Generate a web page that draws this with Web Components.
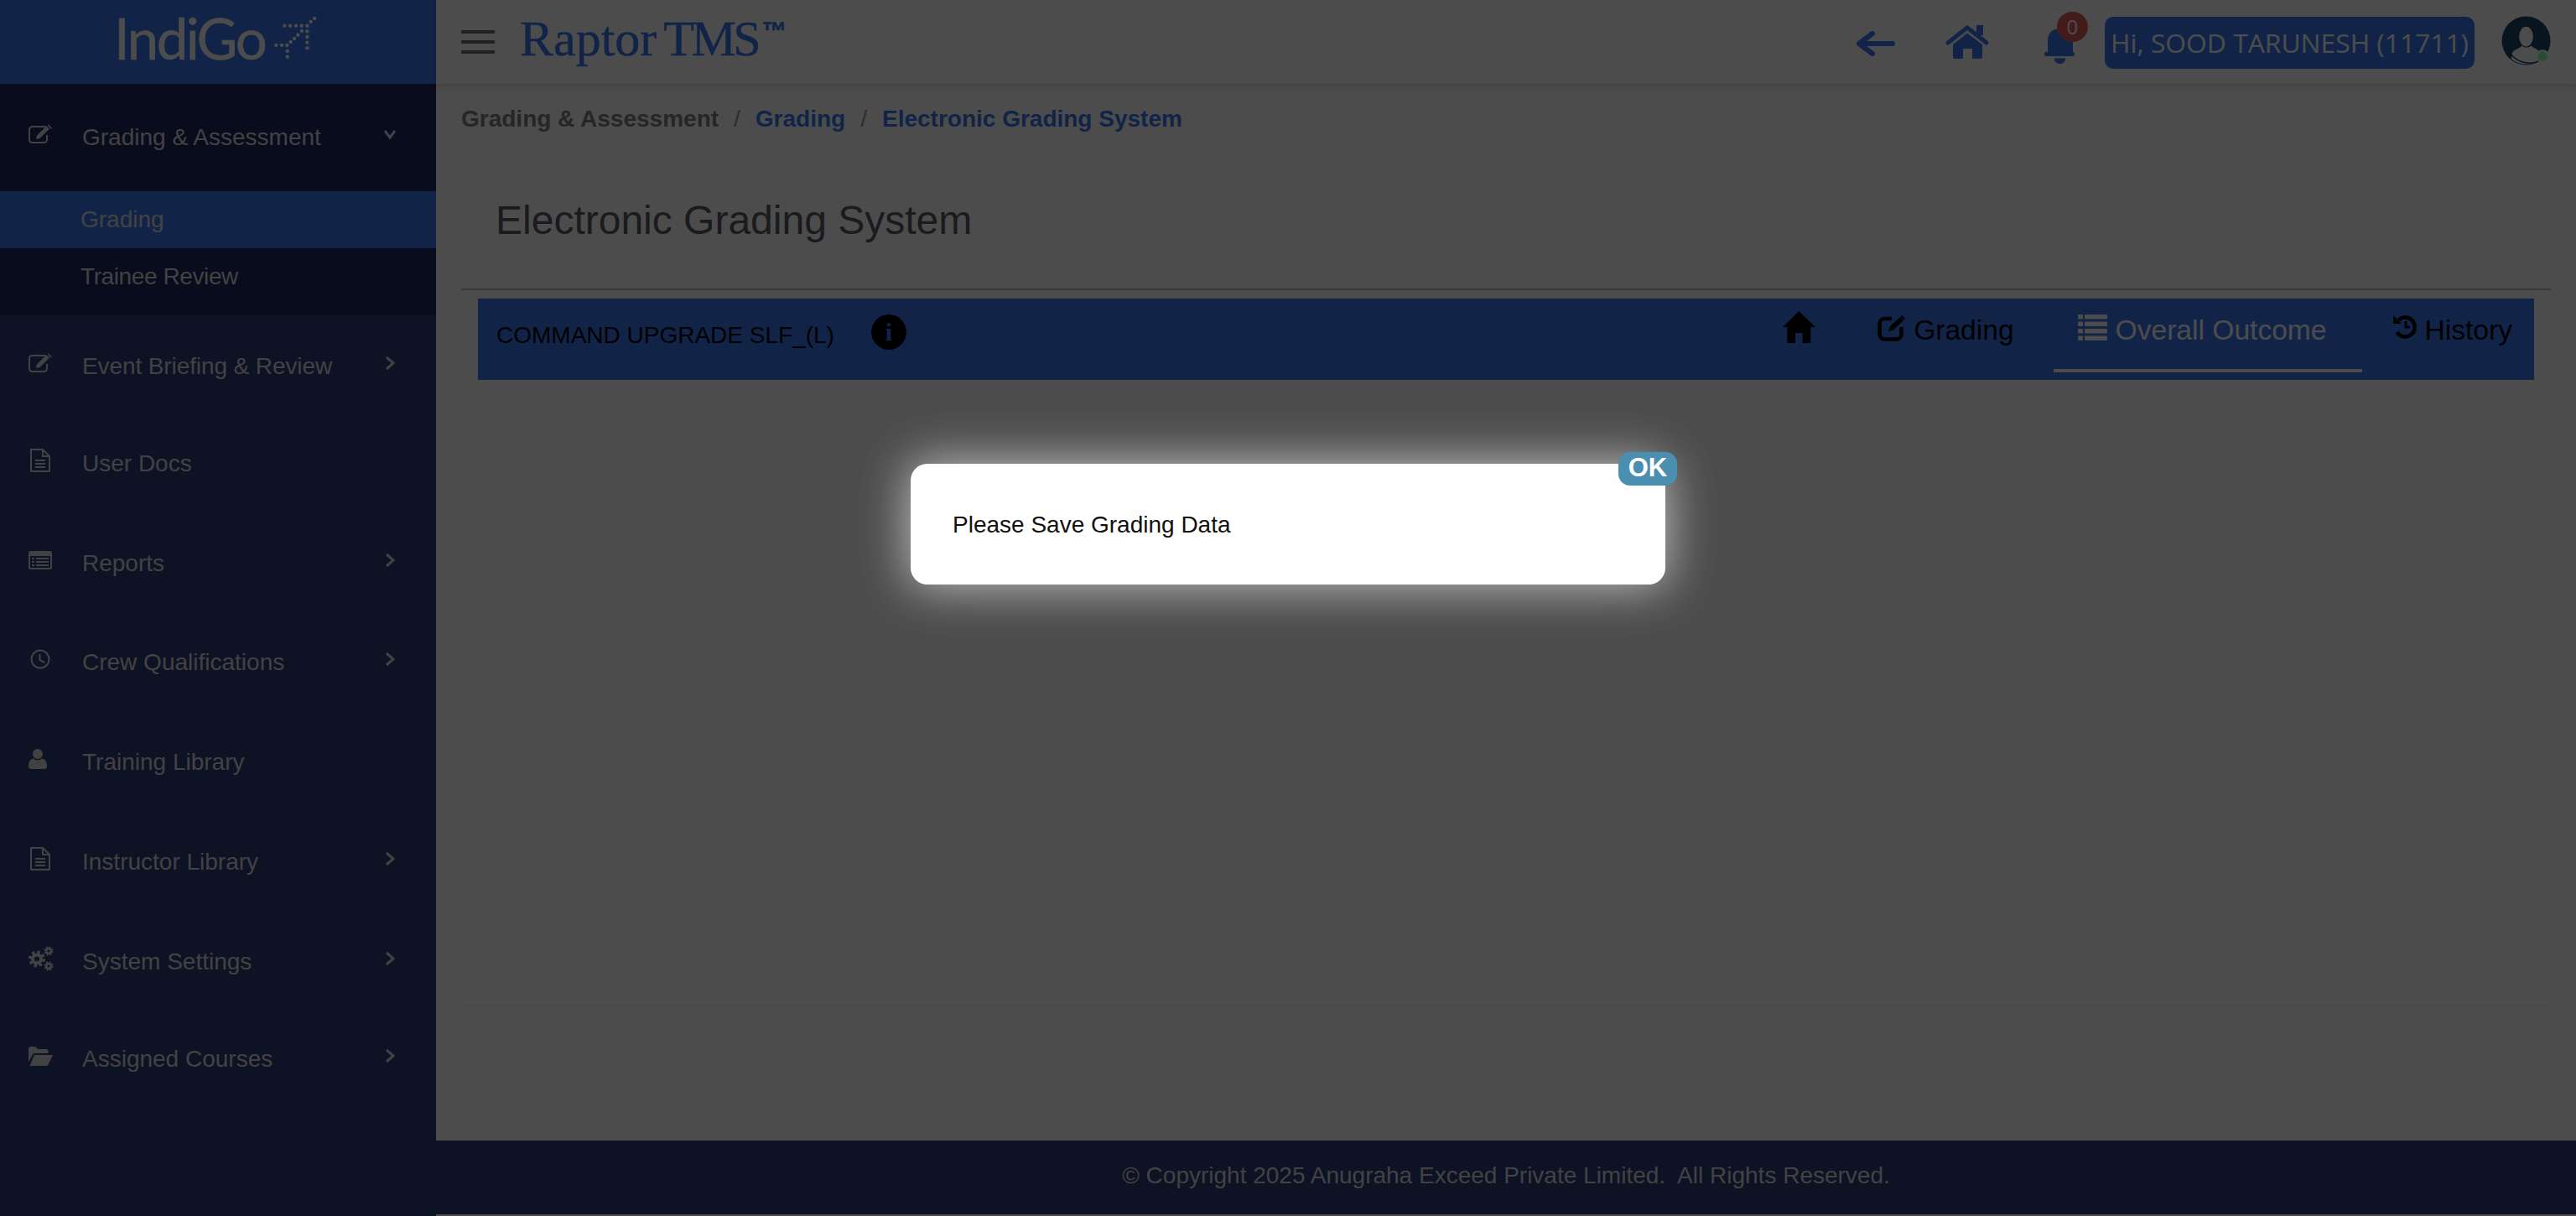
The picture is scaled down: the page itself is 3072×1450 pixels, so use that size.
<!DOCTYPE html>
<html>
<head>
<meta charset="utf-8">
<title>Raptor TMS</title>
<style>
    html, body { margin: 0; height: 100%; background: #fff; }
    body { font-family: "Liberation Sans", Arial, sans-serif; font-size: 28px; overflow: hidden; }
</style>
</head>
<body>

<tms-app>
    <side-nav slot="side">
        <nav-item icon="edit" arrow="down" open>Grading &amp; Assessment</nav-item>
        <sub-item active>Grading</sub-item>
        <sub-item style="letter-spacing: -.4px">Trainee Review</sub-item>
        <sub-end></sub-end>
        <nav-item icon="edit" arrow="right" style="height: 122px; letter-spacing: -.1px">Event Briefing &amp; Review</nav-item>
        <nav-item icon="file" style="height: 110px">User Docs</nav-item>
        <nav-item icon="listalt" arrow="right" style="height: 128px">Reports</nav-item>
        <nav-item icon="clock" arrow="right" style="height: 108px">Crew Qualifications</nav-item>
        <nav-item icon="user" style="height: 130px">Training Library</nav-item>
        <nav-item icon="file" arrow="right" style="height: 108px">Instructor Library</nav-item>
        <nav-item icon="cogs" arrow="right" style="height: 130px">System Settings</nav-item>
        <nav-item icon="folder" arrow="right" style="height: 102px">Assigned Courses</nav-item>
    </side-nav>
    <top-bar slot="top"></top-bar>
    <crumb-trail slot="main"></crumb-trail>
    <page-title slot="main">Electronic Grading System</page-title>
    <grading-bar slot="main">
        <tab-item icon="tabhome"></tab-item>
        <tab-item icon="tabedit">Grading</tab-item>
        <tab-item icon="tablist" active>Overall Outcome</tab-item>
        <tab-item icon="tabhistory">History</tab-item>
    </grading-bar>
    <page-foot slot="foot">© Copyright 2025 Anugraha Exceed Private Limited.&nbsp; All Rights Reserved.</page-foot>
</tms-app>
<alert-dialog>Please Save Grading Data</alert-dialog>

<script>
const BLUE = "#3a7bf0";
const NAVY = "#2f3c7c";
const NAVY_DARK = "#212860";

const ICONS = {
    edit: [28, 22, `<path d="M20 2H4.500A3.500 3.500 0 0 0 1 5.500V17.500A3.500 3.500 0 0 0 4.500 21H18.500A3.500 3.500 0 0 0 22 17.500V12" fill="none" stroke="currentColor" stroke-width="2"/><path d="M10 12.500 21.500 1 25 4.500 13.500 16 9 17ZM22.800 0.300 24 -0.500 28 3.500 26.500 4.800Z" fill="currentColor"/>`],
    file: [24, 28, `<path d="M1 1H15L23 9V27H1ZM15 1V9H23M6 14H18M6 18H18M6 22H18" fill="none" stroke="currentColor" stroke-width="2"/>`],
    listalt: [28, 22, `<path fill-rule="evenodd" d="M2.500 0H25.500A2.500 2.500 0 0 1 28 2.500V19.500A2.500 2.500 0 0 1 25.500 22H2.500A2.500 2.500 0 0 1 0 19.500V2.500A2.500 2.500 0 0 1 2.500 0ZM2 6V20H26V6ZM4 8H7V10H4ZM9 8H24V10H9ZM4 12H7V14H4ZM9 12H24V14H9ZM4 16H7V18H4ZM9 16H24V18H9Z" fill="currentColor"/>`],
    clock: [24, 24, `<circle cx="12" cy="12" r="10.500" fill="none" stroke="currentColor" stroke-width="2"/><path d="M11.500 6V13L17 16" fill="none" stroke="currentColor" stroke-width="2"/>`],
    user: [22, 24, `<circle cx="11" cy="6" r="6" fill="currentColor"/><path d="M0 21C0 15 2 12 6 11.500C8.500 14 13.500 14 16 11.500C20 12 22 15 22 21C22 23 20.500 24 18.500 24H3.500C1.500 24 0 23 0 21Z" fill="currentColor"/>`],
    cogs: [30, 28, `<g fill="none" stroke="currentColor"><circle cx="10" cy="14.500" r="5" stroke-width="4"/><circle cx="10" cy="14.500" r="8" stroke-width="4" stroke-dasharray="3.300 3"/><circle cx="24" cy="5" r="2.800" stroke-width="2.400"/><circle cx="24" cy="5" r="4.400" stroke-width="2.400" stroke-dasharray="1.900 1.560"/><circle cx="24" cy="23" r="2.800" stroke-width="2.400"/><circle cx="24" cy="23" r="4.400" stroke-width="2.400" stroke-dasharray="1.900 1.560"/></g>`],
    folder: [29, 23, `<path d="M0 2.500A2.500 2.500 0 0 1 2.500 0H8L11 3H21A2.500 2.500 0 0 1 23.500 5.500V8H8C6 8 5 9 4.200 10.500L0 18.500ZM8 10H29L23.500 21.500C23 22.500 22 23 21 23H1.500L6 12C6.500 10.500 7 10 8 10Z" fill="currentColor"/>`],
    right: [12, 18, `<path d="M2 2 10 9 2 16" fill="none" stroke="currentColor" stroke-width="3"/>`],
    down: [16, 11, `<path d="M2 1 8 9 14 1" fill="none" stroke="currentColor" stroke-width="3"/>`],
    back: [46, 30, `<path d="M3 15H43M19 3 3 15 19 27" fill="none" stroke="currentColor" stroke-width="6" stroke-linecap="round" stroke-linejoin="round"/>`],
    house: [50, 40, `<rect x="36" y="0" width="8" height="12" fill="currentColor"/><path d="M2 21 25 3 48 21" fill="none" stroke="currentColor" stroke-width="5" stroke-linecap="round"/><path d="M8 23 25 9.500 43 23V38A2 2 0 0 1 41 40H31V28H20V40H10A2 2 0 0 1 8 38Z" fill="currentColor"/>`],
    bell: [36, 43, `<path d="M4 29V16C4 6 10 1 19 1C28 1 34 6 34 16V29Z" fill="currentColor"/><rect y="28.700" width="36" height="5.300" rx="2.500" fill="currentColor"/><path d="M12 36.500H25C25 41 22 43 18.500 43C15 43 12 41 12 36.500Z" fill="currentColor"/>`],
    tabhome: [39, 38, `<path d="M19.300 0 39 19H33.300V38H23.700V26H15V38H5.300V19H0Z" fill="currentColor"/>`],
    tabedit: [34, 32, `<path d="M17 5H8A6 6 0 0 0 2.500 11V24A6 6 0 0 0 8 29.500H23A6 6 0 0 0 28.500 24V15" fill="none" stroke="currentColor" stroke-width="4.500"/><path d="M13 20 15 14 27 3 31 7 19 18.500Z" fill="currentColor"/><path d="M29 1 33 5 31.500 6.500 27.500 2.500Z" fill="currentColor"/>`],
    tablist: [35, 31, `<g fill="currentColor"><rect y="0" width="6" height="5.500" rx="1"/><rect x="8" y="0" width="27" height="5.500" rx="1"/><rect y="8.500" width="6" height="5.500" rx="1"/><rect x="8" y="8.500" width="27" height="5.500" rx="1"/><rect y="17" width="6" height="5.500" rx="1"/><rect x="8" y="17" width="27" height="5.500" rx="1"/><rect y="25.500" width="6" height="5.500" rx="1"/><rect x="8" y="25.500" width="27" height="5.500" rx="1"/></g>`],
    tabhistory: [30, 30, `<path d="M7.500 6.500A11.500 11.500 0 1 1 5.500 21" fill="none" stroke="currentColor" stroke-width="4.500"/><path d="M1 1V11H11Z" fill="currentColor"/><path d="M16 8V15H21" fill="none" stroke="currentColor" stroke-width="3"/>`]
};

// every icon stays the pixel size given by its viewBox unless the user says otherwise
class UiIcon extends HTMLElement {
    connectedCallback() {
        const [w, h, body] = ICONS[this.getAttribute("name")];
        this.attachShadow({ mode: "open" }).innerHTML = `
            <style>:host { display: block; width: ${w}px; height: ${h}px; line-height: 0; } svg { overflow: visible; }</style>
            <svg width="${w}" height="${h}" viewBox="0 0 ${w} ${h}">${body}</svg>`;
    }
}

class TmsApp extends HTMLElement {
    constructor() {
        super();
        this.attachShadow({ mode: "open" }).innerHTML = `
            <style>
                :host { display: grid; grid-template-columns: 520px 1fr; width: 3072px; height: 1450px; }
                .column { display: flex; flex-direction: column; min-width: 0; }
                .content { flex: 1; display: flex; flex-direction: column; padding: 0 30px; }
                .rule { margin-top: auto; margin-bottom: 160px; border-top: 2px solid #f6f6f6; }
            </style>
            <slot name="side"></slot>
            <div class="column">
                <slot name="top"></slot>
                <div class="content">
                    <slot name="main"></slot>
                    <div class="rule"></div>
                </div>
                <slot name="foot"></slot>
            </div>`;
    }
}

class SideNav extends HTMLElement {
    constructor() {
        super();
        this.attachShadow({ mode: "open" }).innerHTML = `
            <style>
                :host { display: flex; flex-direction: column; background: ${NAVY}; color: #dedede; }
                .brand { height: 100px; background: ${BLUE}; color: #fff; display: flex; padding-left: 136px; box-sizing: border-box; }
                .word { font-family: Lato, sans-serif; font-size: 67px; line-height: 90px; letter-spacing: -2.500px; -webkit-text-stroke: .5px currentColor; }
                svg { margin: 20px 0 0 11px; }
            </style>
            <div class="brand">
                <span class="word">IndiGo</span>
                <svg width="50" height="50" viewBox="990 60 150 150" fill="currentColor" id="dots"></svg>
            </div>
            <slot></slot>`;
        const dots = [[1134,66],[1121,78],[1108,92],[1088,92],[1068,92],[1047,92],[1027,92],[1089,111],[1108,112],[1075,125],[1108,132],[1062,138],[1049,150],[1108,152],[1036,162],[1017,162],[997,162],[1108,172],[1037,183],[1037,203]];
        this.shadowRoot.getElementById("dots").innerHTML = dots.map(d => `<circle cx="${d[0]}" cy="${d[1]}" r="6.500"/>`).join("");
    }
}

class NavItem extends HTMLElement {
    connectedCallback() {
        const icon = this.getAttribute("icon");
        const arrow = this.getAttribute("arrow");
        const open = this.hasAttribute("open");
        this.attachShadow({ mode: "open" }).innerHTML = `
            <style>
                :host { display: flex; align-items: center; height: ${open ? 128 : 118}px; background: ${open ? NAVY_DARK : "transparent"}; padding-left: 34px; box-sizing: border-box; }
                .icon { width: 64px; display: flex; margin-bottom: 8px; }
                .text { flex: 1; }
                .arrow { width: 66px; margin-bottom: 8px; display: flex; padding-left: ${open ? 3 : 5}px; box-sizing: border-box; }
                .file { margin-left: 2px; }
            </style>
            <div class="icon"><ui-icon name="${icon}" class="${icon === "file" || icon === "clock" ? "file" : ""}"></ui-icon></div>
            <div class="text"><slot></slot></div>
            <div class="arrow">${arrow ? `<ui-icon name="${arrow}"></ui-icon>` : ""}</div>`;
    }
}

class SubItem extends HTMLElement {
    connectedCallback() {
        this.attachShadow({ mode: "open" }).innerHTML = `
            <style>
                :host { display: flex; align-items: center; height: 68px; padding-left: 96px; background: ${this.hasAttribute("active") ? BLUE : NAVY_DARK}; }
            </style>
            <slot></slot>`;
    }
}

class SubEnd extends HTMLElement {
    constructor() {
        super();
        this.attachShadow({ mode: "open" }).innerHTML = `<style>:host { display: block; height: 12px; background: ${NAVY_DARK}; }</style>`;
    }
}

class TopBar extends HTMLElement {
    constructor() {
        super();
        this.attachShadow({ mode: "open" }).innerHTML = `
            <style>
                :host { display: flex; align-items: center; height: 100px; padding: 0 30px; box-sizing: border-box; background: #fff; box-shadow: 0 2px 8px rgba(0,0,0,.18); position: relative; color: ${BLUE}; }
                .burger { width: 40px; height: 28px; display: flex; flex-direction: column; justify-content: space-between; margin-right: 30px; }
                .burger i { height: 4px; background: #6f6f6f; border-radius: 1px; }
                .logo { font-family: "Liberation Serif", serif; font-size: 60px; line-height: 70px; word-spacing: -7px; margin-top: -8px; white-space: nowrap; -webkit-text-stroke: .5px currentColor; }
                .logo b { font-weight: 400; letter-spacing: -3.500px; }
                .logo sup { font-family: "Liberation Sans", sans-serif; font-weight: 700; font-size: 30px; line-height: 0; vertical-align: 19px; margin-left: 4px; }
                .tools { margin-left: auto; display: flex; align-items: center; }
                .back { margin-right: 61px; margin-top: 3px; }
                .house { margin-right: 67px; }
                .bell { position: relative; margin-right: 36px; margin-top: 9px; }
                .badge { position: absolute; left: 15px; top: -19px; width: 37px; height: 36px; border-radius: 50%; background: #e35a5a; color: #fff; font: 24px/36px "Open Sans", sans-serif; text-align: center; }
                .who { background: ${BLUE}; color: #fff; height: 62px; border-radius: 10px; padding: 0 7px; display: flex; align-items: center; font: 31.800px "Open Sans", sans-serif; margin-right: 32px; margin-top: 1px; white-space: nowrap; }
                .avatar { width: 59px; height: 59px; margin-top: -3px; }
            </style>
            <div class="burger"><i></i><i></i><i></i></div>
            <div class="logo">Raptor <b>TMS</b><sup>™</sup></div>
            <div class="tools">
                <ui-icon class="back" name="back"></ui-icon>
                <ui-icon class="house" name="house"></ui-icon>
                <div class="bell"><ui-icon name="bell"></ui-icon><span class="badge">0</span></div>
                <div class="who">Hi, SOOD TARUNESH (11711)</div>
                <svg class="avatar" viewBox="0 0 60 60">
                    <circle cx="30" cy="30" r="29.500" fill="#1b4367"/>
                    <path d="M13 45C15 40 22 40 25 36C28 39 33 39 36 36C40 40 45 40 48 45V52A28 28 0 0 1 12 52Z" fill="#fff"/>
                    <path d="M12 47A29 29 0 0 0 47 54" fill="none" stroke="#1b4367" stroke-width="1.500"/>
                    <ellipse cx="30" cy="25" rx="8.500" ry="12" fill="#fff"/>
                    <circle cx="50" cy="49" r="8" fill="#fff"/>
                    <circle cx="50" cy="49" r="6" fill="#8cffaa"/>
                </svg>
            </div>`;
    }
}

class CrumbTrail extends HTMLElement {
    constructor() {
        super();
        this.attachShadow({ mode: "open" }).innerHTML = `
            <style>
                :host { display: flex; align-items: center; height: 64px; padding-top: 20px; box-sizing: border-box; font-weight: 700; color: ${BLUE}; gap: 18px; }
                .root { color: #7a8089; }
                .sep { color: #8f969f; font-weight: 400; }
            </style>
            <span class="root">Grading &amp; Assessment</span><span class="sep">/</span><span>Grading</span><span class="sep">/</span><span>Electronic Grading System</span>`;
    }
}

class PageTitle extends HTMLElement {
    constructor() {
        super();
        this.attachShadow({ mode: "open" }).innerHTML = `
            <style>
                :host { display: block; height: 182px; padding: 70px 0 0 41px; box-sizing: border-box; font-size: 48px; line-height: 58px; color: #555c66; border-bottom: 2px solid #bbb; }
            </style>
            <slot></slot>`;
    }
}

class GradingBar extends HTMLElement {
    constructor() {
        super();
        this.attachShadow({ mode: "open" }).innerHTML = `
            <style>
                :host { display: flex; height: 97px; margin: 10px 20px 0; background: ${BLUE}; color: #000; }
                .course { padding: 26px 0 0 22px; line-height: 36px; white-space: nowrap; }
                .info { width: 42px; height: 42px; border-radius: 50%; background: #000; color: ${BLUE}; font: 700 30px/42px "Liberation Serif", serif; text-align: center; margin: 19px 0 0 44px; }
                .tabs { margin-left: auto; display: flex; padding-right: 26px; }
            </style>
            <div class="course">COMMAND UPGRADE SLF_(L)</div>
            <div class="info">i</div>
            <div class="tabs"><slot></slot></div>`;
    }
}

class TabItem extends HTMLElement {
    connectedCallback() {
        const active = this.hasAttribute("active");
        const icon = this.getAttribute("icon");
        const gap = { tabhome: 0, tabedit: 9, tablist: 10, tabhistory: 9 }[icon];
        const padding = { tabhome: "18px 39px 0 31px", tabedit: "18px 43px 0 31px", tablist: "18px 42px 0 29px", tabhistory: "18px 0 0 32px" }[icon];
        this.attachShadow({ mode: "open" }).innerHTML = `
            <style>
                :host { display: flex; align-items: flex-start; height: 88px; box-sizing: border-box; padding: ${padding}; font-size: 33.600px; line-height: 40px; white-space: nowrap; color: ${active ? "#fff" : "#000"}; border-bottom: 4px solid ${active ? "#fff" : "transparent"}; margin-left: 4px; }
                ui-icon { margin-right: ${gap}px; margin-top: ${icon === "tabhome" ? -3 : 1}px; }
            </style>
            <ui-icon name="${icon}"></ui-icon><slot></slot>`;
    }
}

class PageFoot extends HTMLElement {
    constructor() {
        super();
        this.attachShadow({ mode: "open" }).innerHTML = `
            <style>
                :host { display: flex; align-items: center; justify-content: center; height: 88px; box-sizing: border-box; padding-bottom: 4px; margin-bottom: 2px; background: ${NAVY}; color: #dedede; }
            </style>
            <slot></slot>`;
    }
}

class AlertDialog extends HTMLElement {
    constructor() {
        super();
        this.attachShadow({ mode: "open" }).innerHTML = `
            <style>
                :host { position: absolute; inset: 0; background: rgba(0,0,0,.7); }
                .box { position: absolute; left: 1086px; top: 553px; width: 900px; height: 144px; box-sizing: border-box; padding: 2px 50px 0; display: flex; align-items: center; background: #fff; color: #111; border-radius: 20px; box-shadow: 0 0 56px 4px rgba(255,255,255,.62); }
                .ok { position: absolute; right: -14px; top: -14px; width: 70px; height: 40px; border-radius: 14px; background: #4a8fb0; color: #fff; font-size: 31px; font-weight: 700; line-height: 38px; text-align: center; }
            </style>
            <div class="box"><slot></slot><div class="ok">OK</div></div>`;
    }
}

customElements.define("ui-icon", UiIcon);
customElements.define("tms-app", TmsApp);
customElements.define("side-nav", SideNav);
customElements.define("nav-item", NavItem);
customElements.define("sub-item", SubItem);
customElements.define("sub-end", SubEnd);
customElements.define("top-bar", TopBar);
customElements.define("crumb-trail", CrumbTrail);
customElements.define("page-title", PageTitle);
customElements.define("grading-bar", GradingBar);
customElements.define("tab-item", TabItem);
customElements.define("page-foot", PageFoot);
customElements.define("alert-dialog", AlertDialog);
</script>
</body>
</html>
